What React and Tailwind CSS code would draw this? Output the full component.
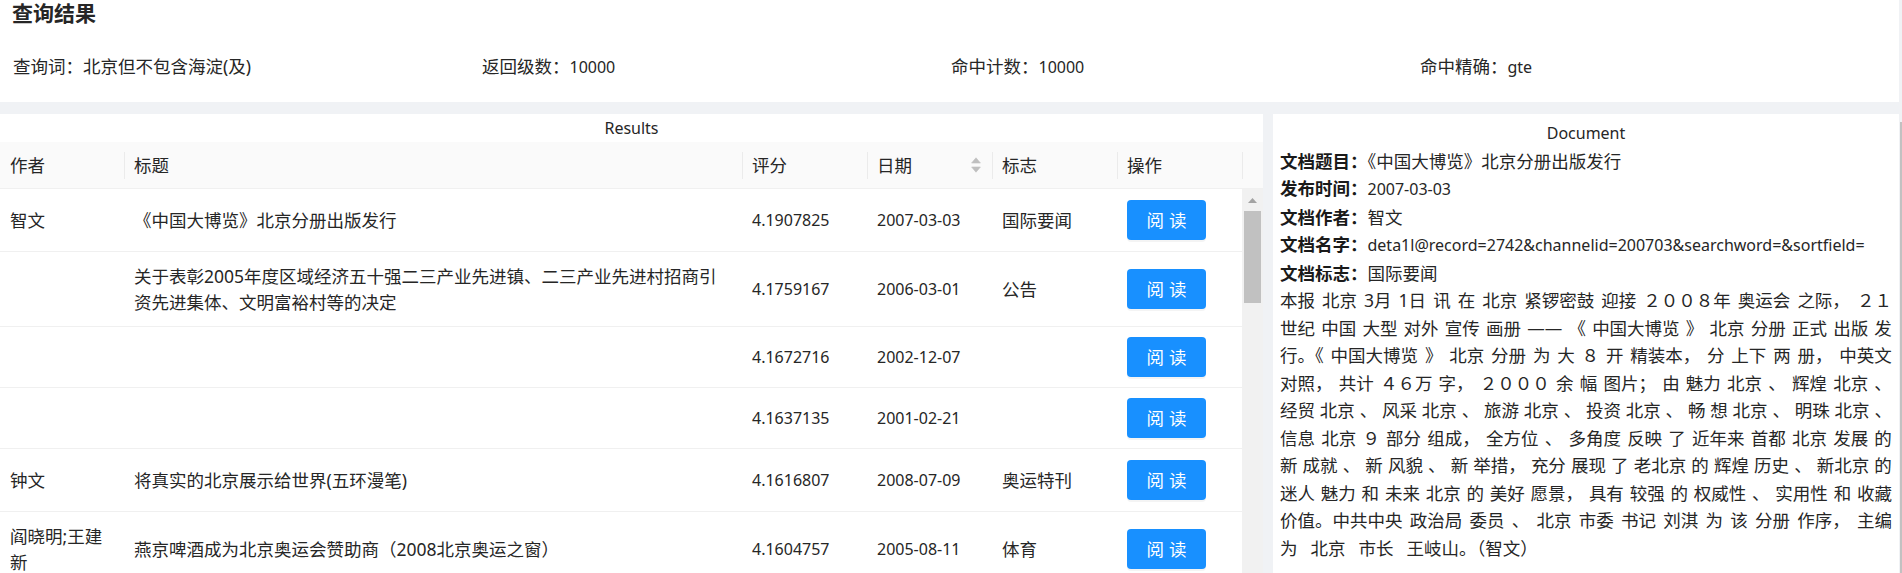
import React from "react";

const rows = [
  { h: "h-[63px]", author: ["智文"], title: ["《中国大博览》北京分册出版发行"], score: "4.1907825", date: "2007-03-03", tag: "国际要闻" },
  { h: "h-[75px]", author: [], title: ["关于表彰2005年度区域经济五十强二三产业先进镇、二三产业先进村招商引", "资先进集体、文明富裕村等的决定"], score: "4.1759167", date: "2006-03-01", tag: "公告" },
  { h: "h-[61px]", author: [], title: [], score: "4.1672716", date: "2002-12-07", tag: "" },
  { h: "h-[61px]", author: [], title: [], score: "4.1637135", date: "2001-02-21", tag: "" },
  { h: "h-[63px]", author: ["钟文"], title: ["将真实的北京展示给世界(五环漫笔)"], score: "4.1616807", date: "2008-07-09", tag: "奥运特刊" },
  { h: "h-[74px]", author: ["阎晓明;王建", "新"], title: ["燕京啤酒成为北京奥运会赞助商（2008北京奥运之窗）"], score: "4.1604757", date: "2005-08-11", tag: "体育" },
];

const bodyLines = [
  "本报 北京 3月 1日 讯 在 北京 紧锣密鼓 迎接 ２００８年 奥运会 之际， ２１",
  "世纪 中国 大型 对外 宣传 画册 —— 《 中国大博览 》 北京 分册 正式 出版 发",
  "行。《 中国大博览 》 北京 分册 为 大 ８ 开 精装本， 分 上下 两 册， 中英文",
  "对照， 共计 ４６万 字， ２０００ 余 幅 图片； 由 魅力 北京 、 辉煌 北京 、",
  "经贸 北京 、 风采 北京 、 旅游 北京 、 投资 北京 、 畅 想 北京 、 明珠 北京 、",
  "信息 北京 ９ 部分 组成， 全方位 、 多角度 反映 了 近年来 首都 北京 发展 的",
  "新 成就 、 新 风貌 、 新 举措， 充分 展现 了 老北京 的 辉煌 历史 、 新北京 的",
  "迷人 魅力 和 未来 北京 的 美好 愿景， 具有 较强 的 权威性 、 实用性 和 收藏",
  "价值。中共中央 政治局 委员 、 北京 市委 书记 刘淇 为 该 分册 作序， 主编",
];
const lastLine = "为 北京 市长 王岐山。（智文）";

function SortIcon() {
  return (
    <svg width="10" height="16" viewBox="0 0 10 16" className="shrink-0">
      <path d="M5 0.8 L9.4 6 H0.6 Z" fill="#bfbfbf" strokeLinejoin="round" stroke="#bfbfbf" strokeWidth="0.6" />
      <path d="M5 15.2 L9.4 10 H0.6 Z" fill="#bfbfbf" strokeLinejoin="round" stroke="#bfbfbf" strokeWidth="0.6" />
    </svg>
  );
}

function HeadCell({ w, children, sort }) {
  return (
    <div className={`${w} h-full flex items-center`}>
      <span className="w-px h-[27px] bg-[#ebebeb] shrink-0" />
      <span className="pl-[9px] flex-1">{children}</span>
      {sort && <span className="mr-[11px] flex items-center"><SortIcon /></span>}
    </div>
  );
}

function ReadButton() {
  return (
    <button className="w-[79px] h-[40px] rounded-[4px] bg-[#1890ff] text-white text-[17.5px] leading-[24px] shadow-[0_2px_0_rgba(0,0,0,0.045)] flex items-center justify-center">
      <span className="tracking-[5px] -mr-[5px]">阅读</span>
    </button>
  );
}

function ResultsPanel() {
  return (
    <div className="w-[1263px] bg-white flex flex-col min-h-0 overflow-hidden">
      <div className="h-[28px] leading-[28px] text-center text-[16px] shrink-0">Results</div>
      <div className="h-[47px] shrink-0 bg-[#fafafa] border-b border-[#f0f0f0] flex items-center">
        <div className="w-[124px] h-full flex items-center pl-[10px]">作者</div>
        <HeadCell w="w-[618px]">标题</HeadCell>
        <HeadCell w="w-[125px]">评分</HeadCell>
        <HeadCell w="w-[125px]" sort>日期</HeadCell>
        <HeadCell w="w-[125px]">标志</HeadCell>
        <HeadCell w="w-[125px]">操作</HeadCell>
        <HeadCell w="w-[21px]"></HeadCell>
      </div>
      <div className="flex flex-1 min-h-0">
        <div className="w-[1242px] overflow-hidden">
          {rows.map((r, i) => (
            <div key={i} className={`${r.h} flex border-b border-[#f0f0f0] leading-[26px]`}>
              <div className="w-[124px] px-[10px] flex flex-col justify-center">
                {r.author.map((t, j) => (<div key={j} className="whitespace-nowrap">{t}</div>))}
              </div>
              <div className="w-[618px] px-[10px] flex flex-col justify-center">
                {r.title.map((t, j) => (<div key={j} className="whitespace-nowrap">{t}</div>))}
              </div>
              <div className="w-[125px] px-[10px] flex items-center text-[16px]">{r.score}</div>
              <div className="w-[125px] px-[10px] flex items-center text-[16px]">{r.date}</div>
              <div className="w-[125px] px-[10px] flex items-center">{r.tag}</div>
              <div className="w-[125px] px-[10px] flex items-center"><ReadButton /></div>
            </div>
          ))}
        </div>
        <div className="w-[21px] bg-[#f1f1f1] flex flex-col items-center">
          <div className="h-[22px] flex items-center justify-center">
            <svg width="9" height="5" viewBox="0 0 9 5"><path d="M4.5 0 L9 5 H0 Z" fill="#a3a3a3" /></svg>
          </div>
          <div className="w-[17px] h-[92px] bg-[#c1c1c1]" />
        </div>
      </div>
    </div>
  );
}

function Field({ label, children, nowrap }) {
  return (
    <div className={nowrap ? "whitespace-nowrap overflow-hidden" : ""}>
      <span className="font-bold text-[#1a1a1a]">{label}</span>
      {children}
    </div>
  );
}

function DocumentPanel() {
  return (
    <div className="w-[626px] bg-white px-[7px] pt-[6px] leading-[27.5px] overflow-hidden">
      <div className="text-center text-[16px]">Document</div>
      <Field label="文档题目：">《中国大博览》北京分册出版发行</Field>
      <Field label="发布时间："><span className="text-[16px]">2007-03-03</span></Field>
      <Field label="文档作者：">智文</Field>
      <Field label="文档名字：" nowrap><span className="text-[16px]">deta1l@record=2742&amp;channelid=200703&amp;searchword=&amp;sortfield=</span></Field>
      <Field label="文档标志：">国际要闻</Field>
      <div>
        {bodyLines.map((line, i) => (
          <div key={i} className="flex justify-between whitespace-nowrap">
            {line.split(" ").map((w, j) => (<span key={j}>{w}</span>))}
          </div>
        ))}
        <div className="flex gap-[13px] whitespace-nowrap">
          {lastLine.split(" ").map((w, j) => (<span key={j}>{w}</span>))}
        </div>
      </div>
    </div>
  );
}

export default function App() {
  return (
    <div className="w-[1902px] h-[573px] overflow-hidden bg-[#f0f2f5] flex font-['Noto_Sans','Noto_Sans_CJK_SC',sans-serif] text-[17.5px] text-[#262626]">
      <div className="w-[1899px] flex flex-col">
        <div className="h-[102px] shrink-0 bg-white pl-[12px]">
          <div className="text-[21px] leading-[26px] font-bold">查询结果</div>
          <div className="mt-[28px] ml-[1px] grid grid-cols-4 w-[1876px] leading-[24px]">
            <div>查询词：北京但不包含海淀(及)</div>
            <div>返回级数：<span className="text-[16px]">10000</span></div>
            <div>命中计数：<span className="text-[16px]">10000</span></div>
            <div>命中精确：<span className="text-[16px]">gte</span></div>
          </div>
        </div>
        <div className="mt-[12px] flex gap-[10px] flex-1 min-h-0">
          <ResultsPanel />
          <DocumentPanel />
        </div>
      </div>
      <div className="w-[3px] pt-[122px] pl-[1px] flex">
        <div className="w-[2px] bg-[#c1c1c1]" />
      </div>
    </div>
  );
}
